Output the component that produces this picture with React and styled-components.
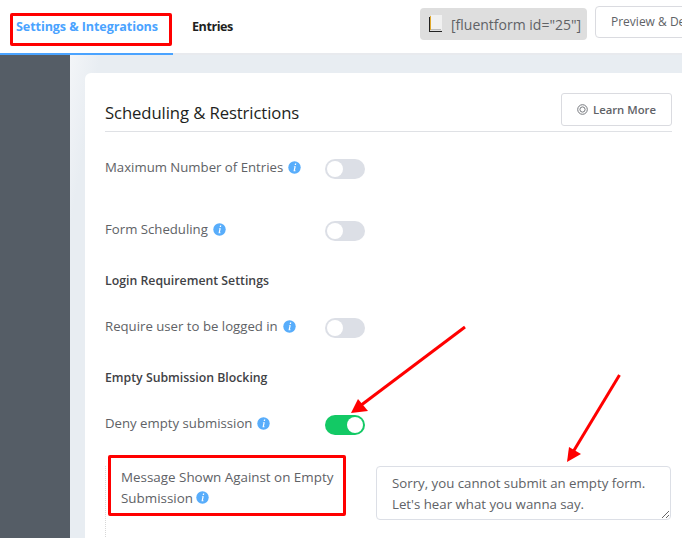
import React from "react";
import styled, { createGlobalStyle } from "styled-components";

const Global = createGlobalStyle`
  html, body { margin: 0; padding: 0; background: #fff; }
  body { font-family: "Open Sans", "Noto Sans", sans-serif; overflow: hidden; }
`;

const Page = styled.div`
  position: relative;
  width: 682px;
  height: 538px;
  overflow: hidden;
`;
const TopBar = styled.div`
  display: flex;
  height: 53px;
  border-bottom: 2px solid #e8eaee;
  background: #fff;
  white-space: nowrap;
`;
const Tab = styled.div`
  flex: none;
  height: 55px;
  box-sizing: border-box;
  padding: 18px 0 0 ${({ $active }) => ($active ? "16px" : "19px")};
  width: ${({ $active }) => ($active ? "173px" : "44px")};
  font-size: 12.6px;
  line-height: 18px;
  font-weight: 700;
  letter-spacing: ${({ $active }) => ($active ? "-0.1px" : "-0.45px")};
  color: ${({ $active }) => ($active ? "#4aa3ff" : "#1e1f21")};
  border-bottom: ${({ $active }) => ($active ? "2px solid #4aa3ff" : "none")};
  box-sizing: ${({ $active }) => ($active ? "border-box" : "content-box")};
`;
const ShortCode = styled.div`
  flex: none;
  display: flex;
  align-items: center;
  gap: 8px;
  margin: 8px 0 0 184px;
  height: 32px;
  width: 167px;
  box-sizing: border-box;
  padding-left: 8px;
  border-radius: 4px;
  background: #dedede;
  font-size: 14px;
  color: #606266;
`;
const PreviewButton = styled.div`
  flex: none;
  margin: 6px 0 0 8px;
  height: 32px;
  box-sizing: border-box;
  padding: 0 15px;
  border: 1px solid #dadbe0;
  border-radius: 4px;
  font-size: 12px;
  line-height: 30px;
  color: #606266;
`;
const Body = styled.div`
  display: flex;
  height: 483px;
`;
const Sidebar = styled.div`
  flex: none;
  width: 70px;
  background: #555d66;
`;
const Content = styled.div`
  flex: none;
  width: 612px;
  padding: 18px 0 0 15px;
  box-sizing: border-box;
  background: linear-gradient(100deg, #f3f5f8 0, #e8edf2 30px);
`;
const Card = styled.div`
  width: 607px;
  height: 470px;
  box-sizing: border-box;
  padding: 20px;
  border-radius: 6px 0 0 0;
  background: #fff;
`;
const CardHeader = styled.div`
  display: flex;
  justify-content: space-between;
  align-items: flex-start;
  height: 38px;
  border-bottom: 1px solid #dfe1e5;
`;
const Title = styled.h2`
  margin: 9px 0 0;
  font-size: 16.7px;
  line-height: 22px;
  font-weight: 400;
  letter-spacing: -0.1px;
  color: #1e1f21;
`;
const LearnButton = styled.div`
  display: flex;
  align-items: center;
  justify-content: center;
  gap: 5px;
  width: 111px;
  height: 33px;
  box-sizing: border-box;
  border: 1px solid #dadbe0;
  border-radius: 3px;
  font-size: 11.3px;
  font-weight: 600;
  color: #606266;
`;
const Row = styled.div`
  display: flex;
  align-items: center;
  height: 20px;
  margin-top: ${({ $top }) => $top}px;
`;
const Label = styled.div`
  display: flex;
  align-items: center;
  gap: 5px;
  width: 220px;
  margin-top: -4px;
  font-size: 13.2px;
  color: #606266;
  white-space: nowrap;
`;
const Heading = styled.div`
  margin-top: ${({ $top }) => $top}px;
  height: 20px;
  font-size: 12.3px;
  line-height: 20px;
  font-weight: 600;
  color: #3f4246;
`;
const Track = styled.div`
  display: flex;
  justify-content: ${({ $on }) => ($on ? "flex-end" : "flex-start")};
  align-items: center;
  width: 40px;
  height: 20px;
  box-sizing: border-box;
  padding: 2px;
  border-radius: 10px;
  background: ${({ $on }) => ($on ? "#13c965" : "#dcdfe6")};
`;
const Knob = styled.div`
  width: 16px;
  height: 16px;
  border-radius: 50%;
  background: #fff;
`;
const MessageRow = styled.div`
  display: flex;
  margin-top: 31px;
  height: 75px;
  border-left: 1px dotted #d8d8d8;
  padding-left: 15px;
`;
const MessageLabel = styled.div`
  width: 255px;
  flex: none;
  padding-top: 1px;
  font-size: 13.4px;
  line-height: 21px;
  color: #606266;
`;
const Message = styled.textarea`
  display: block;
  width: 295px;
  height: 54px;
  box-sizing: border-box;
  padding: 6px 15px;
  border: 1px solid #dcdfe6;
  border-radius: 4px;
  outline: none;
  font-family: inherit;
  font-size: 13.25px;
  line-height: 21px;
  color: #606266;
  overflow: hidden;
`;
const RedBox = styled.div`
  position: absolute;
  left: ${({ $x }) => $x}px;
  top: ${({ $y }) => $y}px;
  width: ${({ $w }) => $w}px;
  height: ${({ $h }) => $h}px;
  box-sizing: border-box;
  border: 3px solid #f00;
  border-radius: 2px;
`;
const Arrows = styled.svg`
  position: absolute;
  left: 0;
  top: 0;
`;
const InfoSvg = styled.svg`
  flex: none;
  display: inline-block;
  vertical-align: -1px;
`;

const Info = () => (
  <InfoSvg width="13" height="13" viewBox="0 0 13 13">
    <circle cx="6.5" cy="6.5" r="6.2" fill="#58adfb" />
    <path d="M7 2.6h1.3l-.3 1.3H6.7zM6.4 5.2h1.4L6.9 9.4h.8l-.2.8H5.5l.9-4.2h-.7z" fill="#fff" />
  </InfoSvg>
);

const Toggle = ({ on }) => (
  <Track $on={on}>
    <Knob />
  </Track>
);

const App = () => (
  <Page>
    <Global />
    <TopBar>
      <Tab $active>Settings &amp; Integrations</Tab>
      <Tab>Entries</Tab>
      <ShortCode>
        <svg width="15" height="18" viewBox="0 0 15 18">
          <rect x="3" y="0" width="11" height="15" fill="#f1f1f1" />
          <path d="M1.5 2v15" stroke="#222" strokeWidth="1" />
          <path d="M2.5 1v14" stroke="#e0a92c" strokeWidth="1" />
          <path d="M1 16.5h13" stroke="#222" strokeWidth="1" />
          <path d="M3 14.5h10" stroke="#bbb" strokeWidth="1" />
        </svg>
        <span>[fluentform id="25"]</span>
      </ShortCode>
      <PreviewButton>Preview &amp; Design</PreviewButton>
    </TopBar>
    <Body>
      <Sidebar />
      <Content>
        <Card>
          <CardHeader>
            <Title>Scheduling &amp; Restrictions</Title>
            <LearnButton>
              <svg width="11" height="11" viewBox="0 0 11 11" fill="none" stroke="#75787d">
                <circle cx="5.5" cy="5.5" r="4.8" />
                <circle cx="5.5" cy="5.5" r="2.6" />
              </svg>
              Learn More
            </LearnButton>
          </CardHeader>
          <Row $top={27}>
            <Label>Maximum Number of Entries <Info /></Label>
            <Toggle />
          </Row>
          <Row $top={42}>
            <Label>Form Scheduling <Info /></Label>
            <Toggle />
          </Row>
          <Heading $top={30}>Login Requirement Settings</Heading>
          <Row $top={27}>
            <Label>Require user to be logged in <Info /></Label>
            <Toggle />
          </Row>
          <Heading $top={30}>Empty Submission Blocking</Heading>
          <Row $top={27}>
            <Label>Deny empty submission <Info /></Label>
            <Toggle on />
          </Row>
          <MessageRow>
            <MessageLabel>
              Message Shown Against on Empty Submission <Info />
            </MessageLabel>
            <Message
              readOnly
              value={"Sorry, you cannot submit an empty form.\nLet's hear what you wanna say."}
            />
          </MessageRow>
        </Card>
      </Content>
    </Body>
    <RedBox $x={10} $y={13} $w={162} $h={33} />
    <RedBox $x={108} $y={455} $w={238} $h={61} />
    <Arrows width="682" height="538" viewBox="0 0 682 538">
      <path d="M465 327L360 406" stroke="#f00" strokeWidth="3" />
      <path d="M351 413L358 399L368 411Z" fill="#f00" />
      <path d="M619.5 375L573 452" stroke="#f00" strokeWidth="3" />
      <path d="M567 462L569 447L581 454Z" fill="#f00" />
    </Arrows>
  </Page>
);

export default App;
